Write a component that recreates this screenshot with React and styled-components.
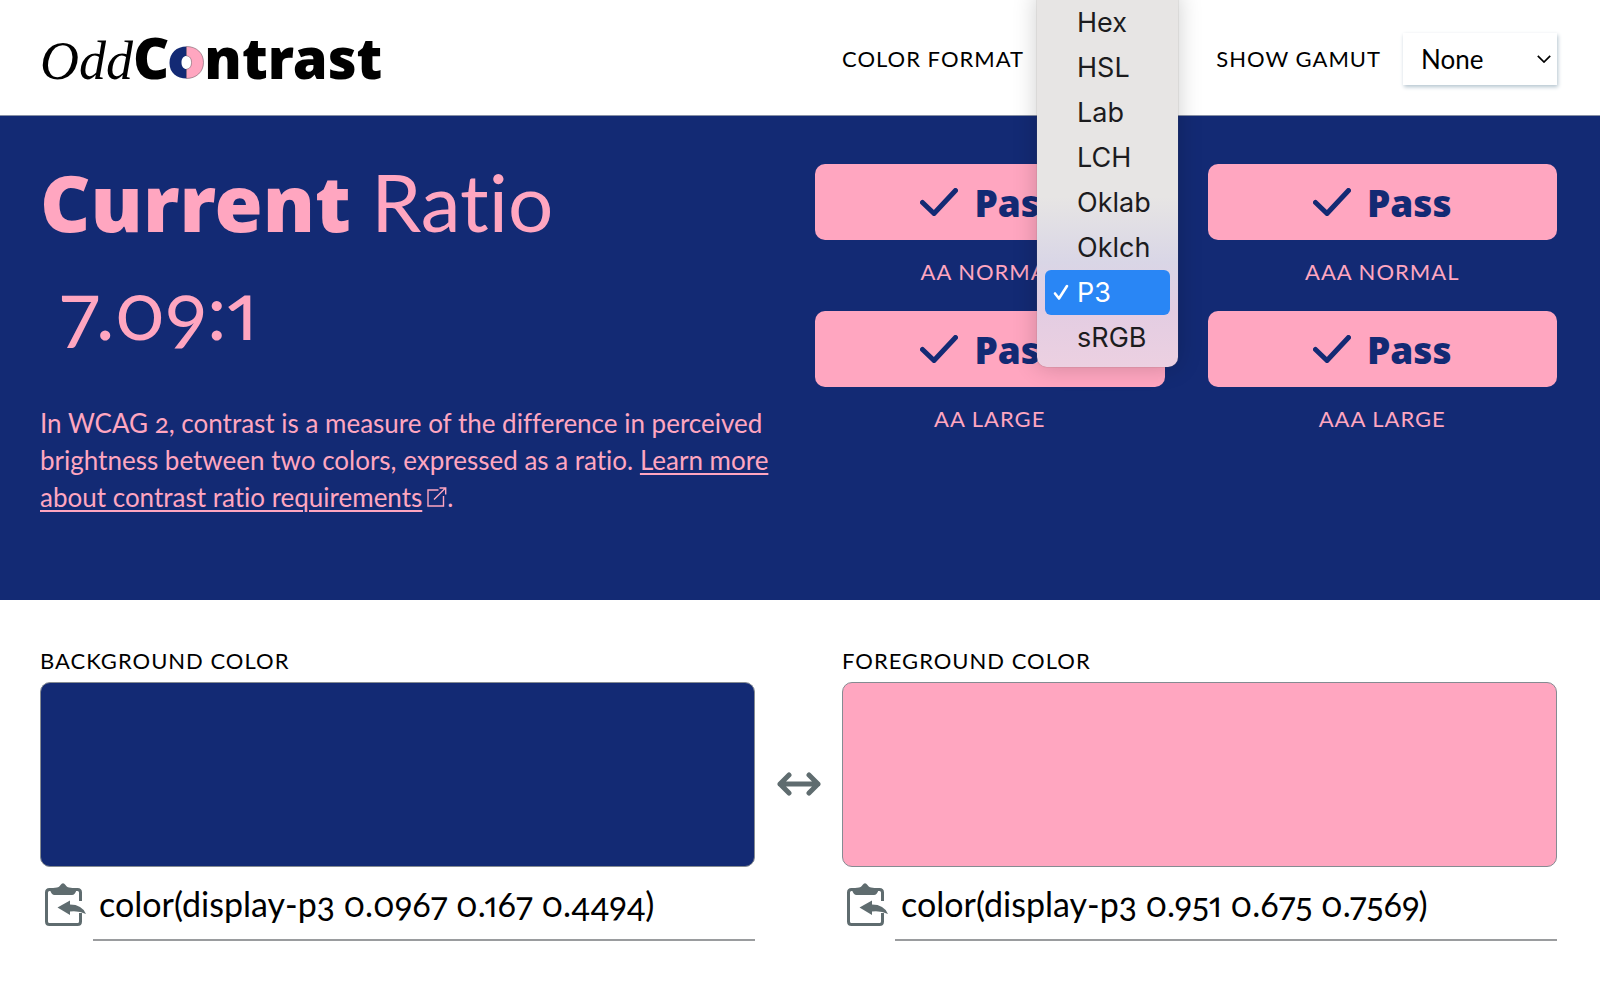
import React, { useState } from 'react';
import styled, { createGlobalStyle } from 'styled-components';

const NAVY = '#132a74';
const PINK = '#ffa6c0';
const SLATE = '#5f6c6f';
const RULE = '#9a9c9e';
const HEAVY = '"Noto Sans", "Open Sans", sans-serif';

const GlobalStyle = createGlobalStyle`
  *, *::before, *::after { box-sizing: border-box; }
  body {
    margin: 0;
    background: #fff;
    color: #000;
    font-family: Lato, "Open Sans", sans-serif;
    font-size: 26px;
    font-variant-numeric: oldstyle-nums proportional-nums;
    font-variant-ligatures: none;
    overflow-x: hidden;
  }
`;

const Columns = styled.div`
  display: grid;
  grid-template-columns: minmax(0, 1fr) minmax(0, 1fr);
  column-gap: 87px;
  align-items: center;
  padding: 3px 43px 0 40px;
`;

const Header = styled(Columns).attrs({ as: 'header' })`
  height: 116px;
  border-bottom: 1px solid #8790a6;
`;

const Logo = styled.a`
  display: flex;
  align-items: baseline;
  color: #000;
  text-decoration: none;
  font-family: ${HEAVY};
  font-size: 56px;
  line-height: 64px;
  font-weight: 900;
`;

const LogoOdd = styled.span`
  font-family: "Liberation Serif", serif;
  font-size: 54px;
  font-style: italic;
  font-weight: 400;
`;

const LogoRing = styled.svg`
  width: 35px;
  height: 33px;
`;

const Controls = styled.div`
  display: flex;
  justify-content: space-between;
  align-items: center;
`;

const Field = styled.div`
  display: flex;
  align-items: center;
  gap: 22px;
  position: relative;
`;

const Caption = styled.label`
  display: block;
  font-size: 22px;
  line-height: 28px;
  letter-spacing: 1px;
  text-transform: uppercase;
  white-space: nowrap;
`;

const SelectBox = styled.div`
  display: grid;
  align-items: center;
  width: ${({ $wide }) => ($wide ? 154 : 118)}px;
  height: 52px;
  background: #fff;
  box-shadow: 1px 2px 4px #b4c4cf;

  > * { grid-area: 1 / 1; }
  > svg {
    justify-self: end;
    width: 14px;
    margin-right: 6px;
    pointer-events: none;
  }
`;

const Select = styled.select`
  appearance: none;
  width: 100%;
  height: 100%;
  border: 0;
  padding: 0 18px;
  background: none;
  color: #000;
  font: inherit;
`;

const Menu = styled.ul`
  position: absolute;
  top: -41px;
  right: -14px;
  z-index: 2;
  width: 141px;
  margin: 0;
  padding: 8px 8px 7px;
  list-style: none;
  border-radius: 0 0 10px 10px;
  background: linear-gradient(#e7e5e4 0 205px, #d9d6e6 270px, #e3cde2 320px, #ecd0e1 100%);
  box-shadow: 0 0 1px #6b5c58, 0 0 24px rgba(0, 0, 0, 0.2);
  font-family: Inter, sans-serif;
  font-size: 27px;
  line-height: 45px;
`;

const MenuItem = styled.li`
  display: grid;
  grid-template-columns: 16px 1fr;
  column-gap: 8px;
  align-items: center;
  padding-left: 8px;
  border-radius: 6px;
  color: ${({ $on }) => ($on ? '#fff' : '#1c1c1e')};
  background: ${({ $on }) => ($on ? '#2986f5' : 'none')};
  cursor: default;
`;

const Banner = styled.section`
  display: grid;
  grid-template-columns: minmax(0, 366fr) minmax(0, 371fr);
  column-gap: 43px;
  align-items: start;
  min-height: 484px;
  padding: 48px 43px 40px 40px;
  background: ${NAVY};
  color: ${PINK};
`;

const Title = styled.h1`
  margin: 0;
  font-size: 80px;
  line-height: 74px;
  font-weight: 400;

  strong {
    font-family: ${HEAVY};
    font-size: 78px;
    font-weight: 900;
  }
`;

const Ratio = styled.p`
  margin: 16px 0 42px;
  padding-left: 20px;
  font-size: 80px;
  line-height: 108px;
`;

const Intro = styled.p`
  margin: 0;
  line-height: 37px;

  a {
    color: inherit;
    text-underline-offset: 3px;
    text-decoration-thickness: 2px;
  }
  svg { width: 20px; height: 20px; margin-left: 5px; }
`;

const Results = styled.div`
  display: grid;
  grid-template-columns: 1fr 1fr;
  gap: 25px 43px;
  text-align: center;
`;

const Badge = styled.div`
  display: flex;
  align-items: center;
  justify-content: center;
  gap: 16px;
  height: 76px;
  margin-bottom: 18px;
  border-radius: 10px;
  background: ${PINK};
  color: ${NAVY};
  font-family: ${HEAVY};
  font-size: 37px;
  font-weight: 900;

  svg { width: 38px; }
`;

const Pickers = styled.main`
  display: grid;
  grid-template-columns: minmax(0, 1fr) 87px minmax(0, 1fr);
  padding: 47px 43px 40px 40px;
`;

const Swatch = styled.div`
  height: 185px;
  margin: 7px 0 12px;
  border: 1px solid #858b92;
  border-radius: 10px;
  background: ${({ $color }) => $color};
`;

const ValueRow = styled.div`
  display: flex;
  gap: 7px;
`;

const IconButton = styled.button`
  display: flex;
  flex: none;
  padding: 0;
  border: 0;
  background: none;
  color: ${SLATE};
`;

const PasteButton = styled(IconButton)`
  margin: 4px 0 0 4px;
  align-self: start;
  svg { width: 42px; height: 43px; }
`;

const SwapButton = styled(IconButton)`
  align-self: start;
  justify-self: center;
  margin-top: 125px;
  svg { width: 44px; height: 24px; }
`;

const ValueInput = styled.input`
  flex: 1;
  min-width: 0;
  height: 62px;
  padding: 0 6px 12px;
  border: 0;
  border-bottom: 2px solid ${RULE};
  background: none;
  color: #000;
  font: inherit;
  font-size: 34px;
  outline: 0;
`;

const CheckIcon = () => (
  <svg viewBox="0 0 38 28" fill="none" stroke="currentColor" strokeWidth="5" strokeLinecap="round" strokeLinejoin="round" aria-hidden="true">
    <path d="M2.5 14.5 14 25.5 35.5 2.5" />
  </svg>
);

const PasteIcon = () => (
  <svg viewBox="0 0 42 43" fill="none" aria-hidden="true">
    <path d="M36.500 18V9.500Q36.500 6.500 33.500 6.500H5.500Q2.500 6.500 2.500 9.500V38.500Q2.500 41.500 5.500 41.500H33.500Q36.500 41.500 36.500 38.500V30" stroke="currentColor" strokeWidth="3" />
    <path d="M6 7Q7 5 11 4.800Q15.500 4.500 16.500 2Q19 -1.500 21.500 2Q22.500 4.500 27 4.800Q31 5 32.500 7Q31 12 28 12H10.500Q7.500 12 6 7Z" fill="currentColor" />
    <path d="M13.500 24.500 26 17.500V21.500Q38 21.500 42 31Q35 27.500 26 28.500V32Z" fill="currentColor" />
  </svg>
);

const SwapIcon = () => (
  <svg viewBox="0 0 44 24" fill="none" stroke="currentColor" strokeWidth="5" strokeLinecap="round" strokeLinejoin="round" aria-hidden="true">
    <path d="M3 12H41M12 3 3 12 12 21M32 3 41 12 32 21" />
  </svg>
);

const FORMATS = ['Hex', 'HSL', 'Lab', 'LCH', 'Oklab', 'Oklch', 'P3', 'sRGB'];
const LEVELS = ['AA Normal', 'AAA Normal', 'AA Large', 'AAA Large'];

function ColorField({ id, label, color, initial }) {
  const [value, setValue] = useState(initial);
  return (
    <div>
      <Caption htmlFor={id}>{label}</Caption>
      <Swatch $color={color} />
      <ValueRow>
        <PasteButton type="button" aria-label={`Paste ${label}`}><PasteIcon /></PasteButton>
        <ValueInput id={id} type="text" spellCheck="false" value={value} onChange={(e) => setValue(e.target.value)} />
      </ValueRow>
    </div>
  );
}

export default function App() {
  const [format, setFormat] = useState('P3');
  return (
    <>
      <GlobalStyle />
      <Header>
        <Logo href="/" aria-label="OddContrast">
          <LogoOdd>Odd</LogoOdd>
          <span>C</span>
          <LogoRing viewBox="0 0 35 33" aria-hidden="true">
            <path d="M17.500.5C7.500.5.5 7 .5 17S8 32.500 17.500 32.500V23C14.500 23 12.500 20.500 12.500 16.500S14.500 10 17.500 10Z" fill={NAVY} />
            <path d="M17.500.5C27.500.5 34.500 7 34.500 16.500S27 32.500 17.500 32.500V23C20.500 23 22.500 20.500 22.500 16.500S20.500 10 17.500 10Z" fill={PINK} stroke="#5b4550" strokeWidth="0.500" />
          </LogoRing>
          <span>ntrast</span>
        </Logo>
        <Controls>
          <Field>
            <Caption htmlFor="format">Color Format</Caption>
            <SelectBox>
              <Select id="format" value={format} onChange={(e) => setFormat(e.target.value)}>
                {FORMATS.map((name) => <option key={name}>{name}</option>)}
              </Select>
            </SelectBox>
            <Menu role="listbox" aria-label="Color Format">
              {FORMATS.map((name) => (
                <MenuItem key={name} role="option" aria-selected={name === format} $on={name === format} onClick={() => setFormat(name)}>
                  {name === format ? (
                    <svg viewBox="0 0 16 17" fill="none" stroke="currentColor" strokeWidth="2.600" strokeLinecap="round" strokeLinejoin="round" aria-hidden="true">
                      <path d="M2 9.500 6 14.500 14 2" />
                    </svg>
                  ) : <span />}
                  <span>{name}</span>
                </MenuItem>
              ))}
            </Menu>
          </Field>
          <Field>
            <Caption htmlFor="gamut">Show Gamut</Caption>
            <SelectBox $wide>
              <Select id="gamut" defaultValue="None">
                <option>None</option>
                <option>sRGB</option>
                <option>P3</option>
              </Select>
              <svg viewBox="0 0 14 8" fill="none" stroke="#000" strokeWidth="1.700" aria-hidden="true">
                <path d="M.8.8 7 7 13.200.8" />
              </svg>
            </SelectBox>
          </Field>
        </Controls>
      </Header>
      <Banner>
        <div>
          <Title><strong>Current</strong> Ratio</Title>
          <Ratio>7.09:1</Ratio>
          <Intro>
            In WCAG 2, contrast is a measure of the difference in perceived brightness between two colors, expressed as a ratio.{' '}
            <a href="https://www.w3.org/WAI/WCAG21/Understanding/contrast-minimum.html">Learn more about contrast ratio requirements</a>
            <svg viewBox="0 0 20 20" fill="none" stroke="currentColor" strokeWidth="1.400" aria-hidden="true">
              <path d="M11.500 3H1V19H16.500V9M7 12.500 18.500 1M12.500 1H18.700V7.500" />
            </svg>
            .
          </Intro>
        </div>
        <Results>
          {LEVELS.map((level) => (
            <div key={level}>
              <Badge><CheckIcon />Pass</Badge>
              <Caption as="div">{level}</Caption>
            </div>
          ))}
        </Results>
      </Banner>
      <Pickers>
        <ColorField id="background" label="Background Color" color={NAVY} initial="color(display-p3 0.0967 0.167 0.4494)" />
        <SwapButton type="button" aria-label="Swap colors"><SwapIcon /></SwapButton>
        <ColorField id="foreground" label="Foreground Color" color={PINK} initial="color(display-p3 0.951 0.675 0.7569)" />
      </Pickers>
    </>
  );
}
